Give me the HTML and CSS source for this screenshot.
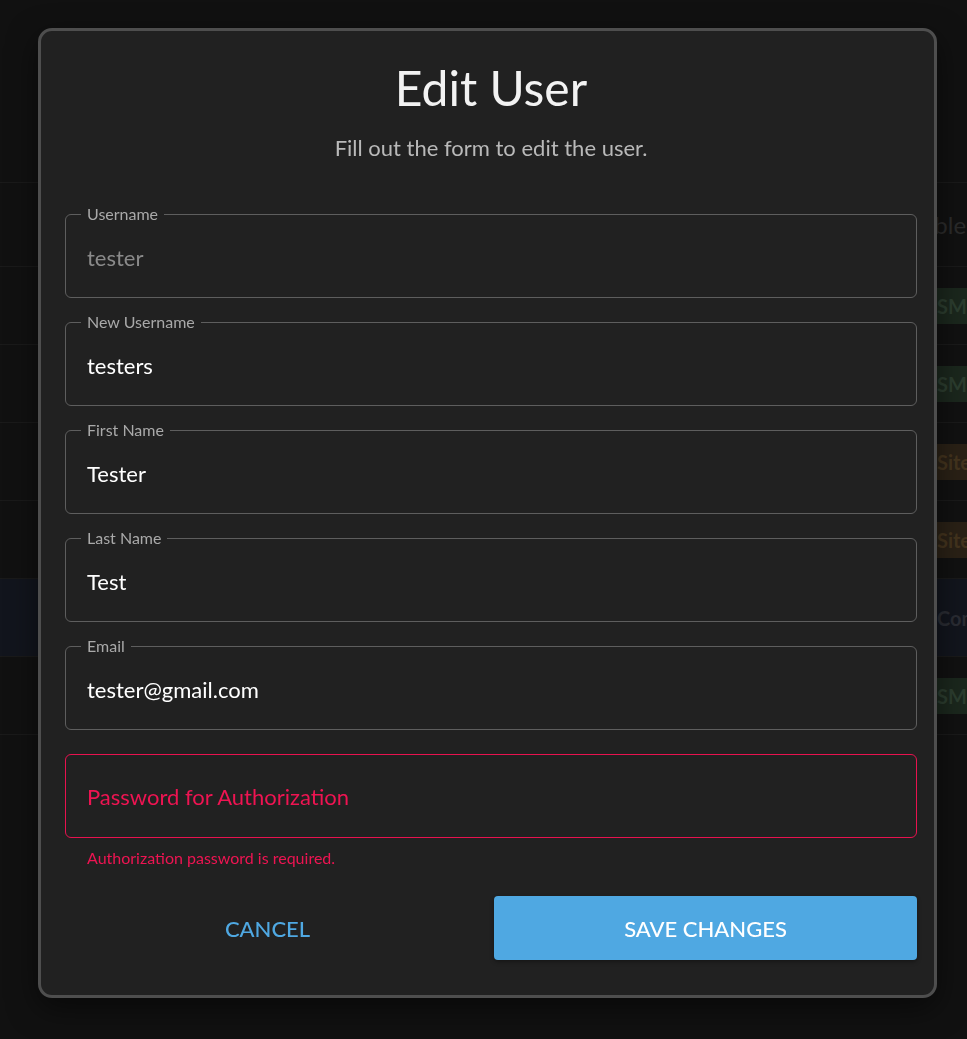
FILE: index.html
```html
<!DOCTYPE html>
<html lang="en">
<head>
<meta charset="utf-8">
<title>Edit User</title>
<link rel="stylesheet" href="styles.css">
</head>
<body>
<div class="page">
  <div class="table">
    <div class="row head"><span class="cell-text">Table</span></div>
    <div class="row"><span class="chip green">SMS</span></div>
    <div class="row"><span class="chip green">SMS</span></div>
    <div class="row"><span class="chip orange">Site</span></div>
    <div class="row"><span class="chip orange">Site</span></div>
    <div class="row blue"><span class="cell-text plain">Com</span></div>
    <div class="row"><span class="chip green">SMS</span></div>
    <div class="row last"></div>
  </div>
</div>

<div class="modal">
  <h1 class="title">Edit User</h1>
  <p class="subtitle">Fill out the form to edit the user.</p>
  <form class="form">
    <fieldset class="field">
      <legend>Username</legend>
      <input class="input disabled" value="tester" disabled>
    </fieldset>
    <fieldset class="field">
      <legend>New Username</legend>
      <input class="input" value="testers">
    </fieldset>
    <fieldset class="field">
      <legend>First Name</legend>
      <input class="input" value="Tester">
    </fieldset>
    <fieldset class="field">
      <legend>Last Name</legend>
      <input class="input" value="Test">
    </fieldset>
    <fieldset class="field">
      <legend>Email</legend>
      <input class="input" value="tester@gmail.com">
    </fieldset>
    <div class="field error-field">
      <input class="input error-input" type="password" placeholder="Password for Authorization">
    </div>
    <p class="error-text">Authorization password is required.</p>
    <div class="actions">
      <button type="button" class="btn cancel">Cancel</button>
      <button type="button" class="btn save">Save Changes</button>
    </div>
  </form>
</div>
</body>
</html>
```
FILE: styles.css
```css
* { box-sizing: border-box; }
html, body {
  margin: 0;
  padding: 0;
  background: #111111;
  height: 100%;
  overflow: hidden;
  font-family: "Lato", "Noto Sans", sans-serif;
}

/* background page (dimmed behind modal) */
.page {
  padding-top: 182px;
}
.table {
  display: flex;
  flex-direction: column;
}
.row {
  height: 78px;
  border-top: 1px solid #1a1a1a;
  display: flex;
  align-items: center;
  padding-left: 935px;
}
.row.head { height: 84px; }
.row.blue { background: #12151d; }
.row.last { border-top: 1px solid #1a1a1a; }
.cell-text {
  color: #2b2b2b;
  font-size: 24px;
  font-weight: 400;
  margin-left: -24px;
  white-space: nowrap;
}
.cell-text.plain {
  margin-left: 2px;
  color: #2a2c33;
  font-weight: 700;
  font-size: 20px;
}
.chip {
  display: inline-flex;
  align-items: center;
  height: 36px;
  padding: 0 10px 0 2px;
  font-size: 20px;
  font-weight: 700;
  white-space: nowrap;
}
.chip.green { background: #1b271d; color: #2c3d2f; }
.chip.orange { background: #2a2116; color: #44341e; }

/* modal */
.modal {
  position: fixed;
  top: 28px;
  left: 38px;
  width: 899px;
  height: 970px;
  background: #212121;
  border: 3px solid #4e4e4e;
  border-radius: 14px;
  padding: 0 17px 0 24px;
  box-shadow: 0 10px 30px rgba(0,0,0,0.5);
}
.title {
  margin: 29px 0 0;
  text-align: center;
  font-size: 48px;
  line-height: 56px;
  font-weight: 400;
  color: #f2f2f2;
}
.subtitle {
  margin: 18px 0 0;
  text-align: center;
  font-size: 22px;
  line-height: 28px;
  color: #b9b9b9;
}
.form {
  display: flex;
  flex-direction: column;
  margin-top: 42px;
}
.field {
  margin: 0 0 14px;
  padding: 0 20px 0 15px;
  border: 1px solid #5e5e5e;
  border-radius: 6px;
  min-width: 0;
}
.field legend {
  padding: 0 6px;
  font-size: 16px;
  line-height: 20px;
  color: #a9a9a9;
}
.input {
  display: block;
  width: 100%;
  height: 66px;
  margin: 0 0 7px;
  padding: 0 6px;
  background: transparent;
  border: none;
  outline: none;
  color: #ffffff;
  font-family: inherit;
  font-size: 22px;
}
.input.disabled { color: #8a8a8a; }
.error-field {
  margin-top: 10px;
  margin-bottom: 0;
  height: 84px;
  border-color: #e8124f;
  padding: 0 20px 0 21px;
  display: flex;
  align-items: center;
}
.error-input {
  padding: 0;
  margin: 0;
  height: 40px;
}
.error-input::placeholder { color: #ee1452; opacity: 1; }
.error-text {
  margin: 10px 0 0 22px;
  font-size: 16px;
  line-height: 20px;
  color: #ee1452;
}
.actions {
  display: flex;
  gap: 24px;
  margin-top: 28px;
}
.btn {
  height: 64px;
  border: none;
  border-radius: 4px;
  font-family: inherit;
  font-size: 22px;
  font-weight: 500;
  text-transform: uppercase;
  cursor: pointer;
}
.btn.cancel {
  flex: 1;
  background: transparent;
  color: #4fa8e2;
}
.btn.save {
  width: 423px;
  background: #4fa8e2;
  color: #ffffff;
  box-shadow: 0 2px 4px rgba(0,0,0,0.35);
}
```
